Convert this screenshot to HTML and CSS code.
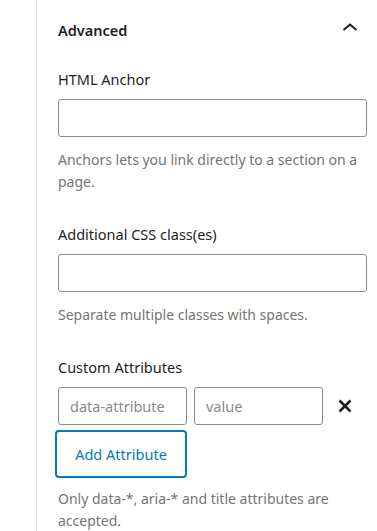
FILE: index.html
```html
<!DOCTYPE html>
<html lang="en">
<head>
    <meta charset="UTF-8">
    <title>Advanced</title>
    <link rel="stylesheet" href="styles.css">
</head>
<body>

    <div class="sidebar">

        <!-- Advanced panel -->
        <section class="panel">
            <div class="panel-header">
                <h2>Advanced</h2>
                <svg class="chevron" width="16" height="10" viewBox="0 0 16 10" aria-hidden="true">
                    <polyline points="1.5,8 8,2.5 14.5,8" fill="none" stroke="#1e1e1e" stroke-width="2"/>
                </svg>
            </div>

            <div class="field">
                <label for="anchor">HTML Anchor</label>
                <input type="text" id="anchor">
                <p class="help">Anchors lets you link directly to a section on a page.</p>
            </div>

            <div class="field">
                <label for="css-class">Additional CSS class(es)</label>
                <input type="text" id="css-class">
                <p class="help">Separate multiple classes with spaces.</p>
            </div>

            <div class="field">
                <label>Custom Attributes</label>
                <div class="attr-row">
                    <input type="text" class="attr-input" placeholder="data-attribute">
                    <input type="text" class="attr-input" placeholder="value">
                    <button class="remove-button" aria-label="Remove">
                        <svg width="14" height="14" viewBox="0 0 14 14" aria-hidden="true">
                            <path d="M1.5 1.5L12.5 12.5M12.5 1.5L1.5 12.5" stroke="#1e1e1e" stroke-width="2.6"/>
                        </svg>
                    </button>
                </div>
                <button class="add-button">Add Attribute</button>
                <p class="help">Only data-*, aria-* and title attributes are accepted.</p>
            </div>
        </section>

    </div>

</body>
</html>
```

FILE: styles.css
```css
/* Reset */
* {
    box-sizing: border-box;
    margin: 0;
    padding: 0;
}

html, body {
    height: 100%;
    overflow: hidden;
}

body {
    font-family: 'Noto Sans', 'Open Sans', Arial, sans-serif;
    font-size: 14px;
    line-height: 22px;
    color: #1e1e1e;
    background-color: #ffffff;
}

/* Sidebar with left divider */
.sidebar {
    margin-left: 36px;
    border-left: 1px solid #e0e0e0;
    height: 100%;
}

.panel {
    padding: 19px 10px 0 21px;
}

/* Header */
.panel-header {
    display: flex;
    justify-content: space-between;
    align-items: center;
    margin-bottom: 27px;
}

.panel-header h2 {
    font-size: 14.5px;
    font-weight: 600;
    line-height: 22px;
}

.chevron {
    margin-right: 9px;
    margin-top: -6px;
}

/* Fields */
.field {
    margin-bottom: 30px;
}

.field:last-child {
    margin-bottom: 0;
}

.field label {
    display: block;
    margin-bottom: 9px;
    font-size: 14.5px;
}

.field input[type="text"] {
    display: block;
    width: 100%;
    height: 38px;
    border: 1px solid #8c8c8c;
    border-radius: 3px;
    padding: 0 11px;
    font-family: inherit;
    font-size: 14.5px;
    color: #1e1e1e;
}

.field input::placeholder {
    color: #8a8a8a;
}

.help {
    margin-top: 12px;
    color: #757575;
}

/* Custom attributes */
.attr-row {
    display: flex;
    align-items: center;
    gap: 7px;
}

.field input.attr-input {
    width: 129px;
    flex: none;
}

.remove-button {
    background: none;
    border: none;
    width: 30px;
    height: 30px;
    display: flex;
    align-items: center;
    justify-content: center;
    cursor: pointer;
}

.add-button {
    display: block;
    margin: 5px 0 0 -3px;
    width: 132px;
    height: 48px;
    border: 2.5px solid #007cba;
    border-radius: 4px;
    background-color: #ffffff;
    color: #007cba;
    font-family: inherit;
    font-size: 14.5px;
    cursor: pointer;
}

.add-button + .help {
    margin-top: 10px;
}
```
